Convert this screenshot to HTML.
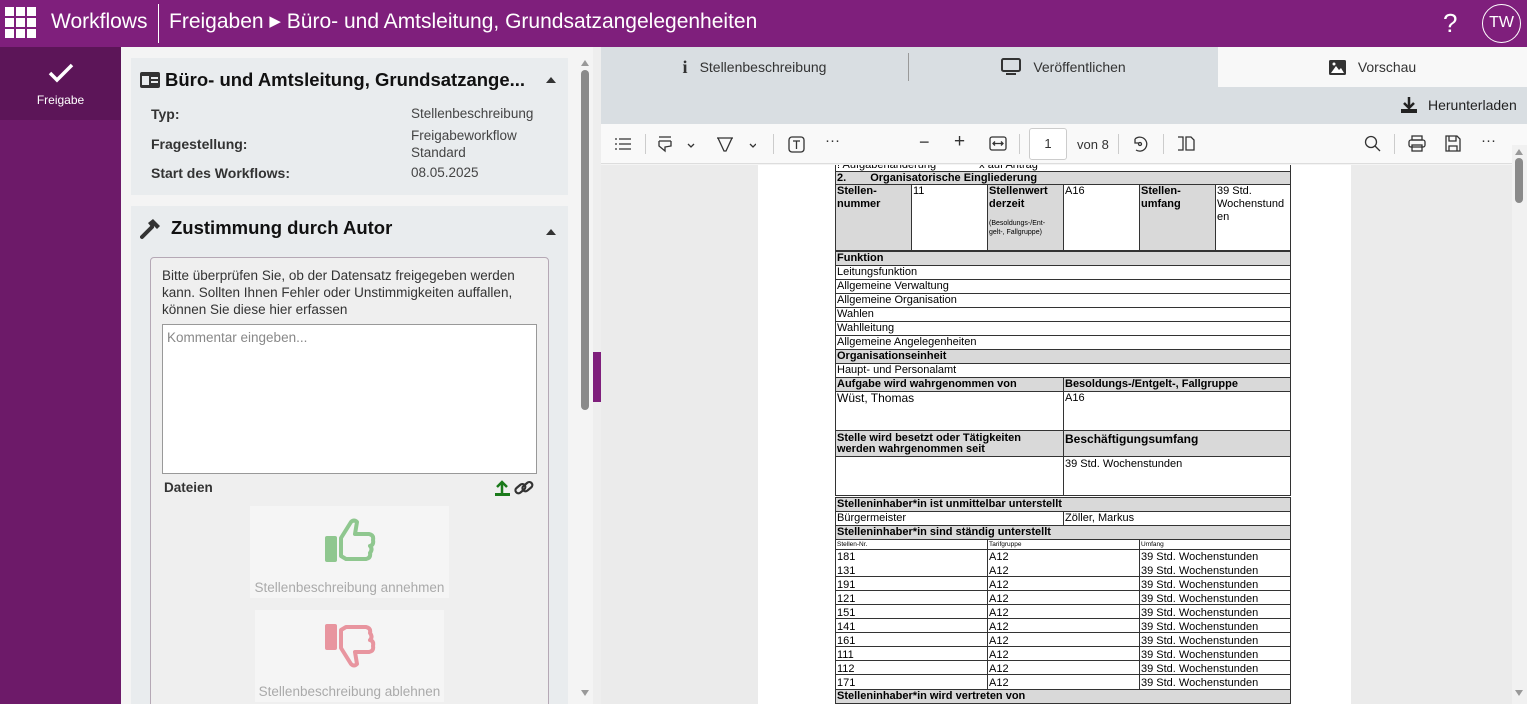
<!DOCTYPE html>
<html style="width:1527px;height:704px;overflow:hidden"><head><meta charset="utf-8"><style>
*{box-sizing:border-box;margin:0;padding:0}
body{width:1527px;height:704px;overflow:hidden;font-family:"Liberation Sans",sans-serif;background:#f4f4f4;position:relative;color:#333}
.a{position:absolute}
.top{left:0;top:0;width:1527px;height:47px;background:#7f1f7c;color:#fff}
.side{left:0;top:47px;width:121px;height:657px;background:#6d1a69}
.card{background:#e9ecee}
.lbl{font-size:14px;font-weight:bold;color:#333}
.val{font-size:13.5px;color:#444}
.pdf{font-family:"Liberation Sans",sans-serif;font-size:11px;color:#000;line-height:13px}
.c{position:absolute;border:1px solid #333;padding:0 1px;overflow:hidden;background:#fff}
.g{background:#d9d9d9;font-weight:bold}
.tab{top:49px;height:36px;font-size:14px;color:#333;display:flex;align-items:center;justify-content:center;gap:12px}
</style></head><body>
<div class="a top">
 <svg class="a" style="left:5px;top:7px" width="32" height="32" viewBox="0 0 32 32" fill="#fff"><rect x="0" y="0" width="9" height="9"/><rect x="11" y="0" width="9" height="9"/><rect x="22" y="0" width="9" height="9"/><rect x="0" y="11" width="9" height="9"/><rect x="11" y="11" width="9" height="9"/><rect x="22" y="11" width="9" height="9"/><rect x="0" y="22" width="9" height="9"/><rect x="11" y="22" width="9" height="9"/><rect x="22" y="22" width="9" height="9"/></svg>
 <div class="a" style="left:51px;top:10px;font-size:21px">Workflows</div>
 <div class="a" style="left:158px;top:4px;width:1px;height:39px;background:#fff"></div>
 <div class="a" style="left:169px;top:10px;font-size:21px">Freigaben <span style="font-size:15px;position:relative;top:-2px">&#9654;</span> Büro- und Amtsleitung, Grundsatzangelegenheiten</div>
 <div class="a" style="left:1443px;top:8px;font-size:26px">?</div>
 <div class="a" style="left:1482px;top:4px;width:39px;height:39px;border:1.5px solid #fff;border-radius:50%;font-size:16px;text-align:center;line-height:36px">TW</div>
</div>
<div class="a side"></div>
<div class="a" style="left:0;top:47px;width:121px;height:73px;background:#5c1558;color:#fff;text-align:center">
 <svg style="margin-top:16px" width="26" height="20" viewBox="0 0 26 20"><path d="M2 10 L9 17 L24 2" stroke="#fff" stroke-width="3.5" fill="none"/></svg>
 <div style="font-size:12px;margin-top:5px">Freigabe</div>
</div>
<!-- left panel -->
<div class="a card" style="left:131px;top:58px;width:437px;height:137px">
 <svg class="a" style="left:9px;top:14px" width="20" height="16" viewBox="0 0 20 16"><rect x="0" y="0" width="20" height="16" rx="2" fill="#333"/><rect x="2" y="4" width="7" height="9" fill="#e9ecee"/><rect x="11" y="5" width="7" height="2" fill="#e9ecee"/><rect x="11" y="9" width="7" height="2" fill="#e9ecee"/></svg>
 <div class="a" style="left:34px;top:11px;font-size:18.5px;font-weight:bold;color:#111">Büro- und Amtsleitung, Grundsatzange...</div>
 <div class="a" style="left:415px;top:19px;width:0;height:0;border-left:5px solid transparent;border-right:5px solid transparent;border-bottom:6px solid #333"></div>
 <div class="a lbl" style="left:20px;top:48px">Typ:</div>
 <div class="a val" style="left:280px;top:48px">Stellenbeschreibung</div>
 <div class="a lbl" style="left:20px;top:78px">Fragestellung:</div>
 <div class="a val" style="left:280px;top:69px;line-height:17px">Freigabeworkflow<br>Standard</div>
 <div class="a lbl" style="left:20px;top:107px">Start des Workflows:</div>
 <div class="a val" style="left:280px;top:107px">08.05.2025</div>
</div>
<div class="a card" style="left:131px;top:206px;width:437px;height:498px;overflow:hidden">
 <svg class="a" style="left:9px;top:12px" width="22" height="22" viewBox="0 0 22 22"><path d="M2 19 L12 9" stroke="#333" stroke-width="4" stroke-linecap="round"/><path d="M8 5 L13 1 L20 8 L17 11 L14 8 L12 10 Z" fill="#333"/></svg>
 <div class="a" style="left:40px;top:11px;font-size:18.5px;font-weight:bold;color:#111">Zustimmung durch Autor</div>
 <div class="a" style="left:415px;top:23px;width:0;height:0;border-left:5px solid transparent;border-right:5px solid transparent;border-bottom:6px solid #333"></div>
 <div class="a" style="left:19px;top:51px;width:399px;height:460px;border:1px solid #b5a8b5;border-radius:4px;background:#efefef">
  <div class="a" style="left:11px;top:9px;width:380px;font-size:13.5px;line-height:17px;color:#333">Bitte überprüfen Sie, ob der Datensatz freigegeben werden kann. Sollten Ihnen Fehler oder Unstimmigkeiten auffallen, können Sie diese hier erfassen</div>
  <div class="a" style="left:11px;top:66px;width:375px;height:150px;background:#fff;border:1px solid #999"><div style="padding:5px 4px;font-size:13.5px;color:#888">Kommentar eingeben...</div></div>
  <div class="a" style="left:13px;top:222px;font-size:13.5px;font-weight:bold;color:#333">Dateien</div>
  <svg class="a" style="left:343px;top:222px" width="42" height="17" viewBox="0 0 42 17"><path d="M8 13 V3 M3 7 L8 2 L13 7" stroke="#1a7a1a" stroke-width="2.5" fill="none"/><rect x="1" y="13" width="15" height="3" fill="#1a7a1a"/><g stroke="#333" stroke-width="2.2" fill="none"><rect x="21" y="6" width="11" height="6" rx="3" transform="rotate(-40 26 9)"/><rect x="28" y="4" width="11" height="6" rx="3" transform="rotate(-40 33 7)"/></g></svg>
  <div class="a" style="left:99px;top:248px;width:199px;height:92px;background:#f5f5f5;text-align:center">
   <svg style="margin-top:12px" width="52" height="46" viewBox="0 0 52 46"><rect x="1" y="18" width="12" height="26" rx="2" fill="#8fc78f"/><path d="M17 20 L27 4 Q30 1 33 4 L31 16 H45 Q50 17 49 22 Q50 27 46 28 Q49 31 46 35 Q47 40 42 41 H22 L17 38 Z" fill="none" stroke="#8fc78f" stroke-width="4" stroke-linejoin="round"/></svg>
   <div style="font-size:13.5px;color:#aaa;margin-top:11px">Stellenbeschreibung annehmen</div>
  </div>
  <div class="a" style="left:104px;top:352px;width:189px;height:92px;background:#f5f5f5;text-align:center">
   <svg style="margin-top:12px" width="52" height="46" viewBox="0 0 52 46"><rect x="1" y="2" width="12" height="26" rx="2" fill="#e8959f"/><path d="M17 26 L27 42 Q30 45 33 42 L31 30 H45 Q50 29 49 24 Q50 19 46 18 Q49 15 46 11 Q47 6 42 5 H22 L17 8 Z" fill="none" stroke="#e8959f" stroke-width="4" stroke-linejoin="round"/></svg>
   <div style="font-size:13.5px;color:#aaa;margin-top:11px">Stellenbeschreibung ablehnen</div>
  </div>
 </div>
</div>
<!-- left scrollbar -->
<div class="a" style="left:577px;top:47px;width:16px;height:657px;background:#f4f4f4"></div>
<div class="a" style="left:581px;top:60px;width:0;height:0;border-left:4px solid transparent;border-right:4px solid transparent;border-bottom:6px solid #999"></div>
<div class="a" style="left:581px;top:70px;width:8px;height:340px;background:#8a8a8a;border-radius:4px"></div>
<div class="a" style="left:581px;top:690px;width:0;height:0;border-left:4px solid transparent;border-right:4px solid transparent;border-top:6px solid #999"></div>
<div class="a" style="left:593px;top:47px;width:8px;height:657px;background:#eee"></div>
<div class="a" style="left:593px;top:352px;width:8px;height:50px;background:#7f1f7c"></div>
<!-- right -->
<div class="a" style="left:601px;top:47px;width:926px;height:40px;background:#d9dee2"></div>
<div class="a" style="left:1218px;top:47px;width:309px;height:40px;background:#f8f8f8"></div>
<div class="a" style="left:908px;top:53px;width:1px;height:28px;background:#999"></div>
<div class="a tab" style="left:601px;width:307px"><span style="font-family:'Liberation Serif';font-weight:bold;font-size:18px">i</span>Stellenbeschreibung</div>
<div class="a tab" style="left:909px;width:309px"><svg width="20" height="18" viewBox="0 0 20 18"><rect x="1" y="1" width="18" height="12" rx="1.5" fill="none" stroke="#333" stroke-width="2"/><rect x="5" y="15" width="10" height="2" fill="#333"/></svg>Veröffentlichen</div>
<div class="a tab" style="left:1218px;width:309px"><svg width="17" height="15" viewBox="0 0 17 15"><rect x="0" y="0" width="17" height="15" rx="1.5" fill="#333"/><path d="M2 13 L7 6 L10 10 L12 8 L15 13Z" fill="#fff"/><circle cx="5" cy="4" r="1.5" fill="#fff"/></svg>Vorschau</div>
<div class="a" style="left:601px;top:87px;width:926px;height:37px;background:#d9dee2"></div>
<svg class="a" style="left:1400px;top:96px" width="18" height="18" viewBox="0 0 18 18"><path d="M9 1 V11 M4 7 L9 12 L14 7" stroke="#222" stroke-width="2.5" fill="none"/><rect x="1" y="13" width="16" height="4" fill="#222"/></svg>
<div class="a" style="left:1428px;top:97px;font-size:14px;color:#222">Herunterladen</div>
<div class="a" style="left:601px;top:124px;width:926px;height:40px;background:#f9f9f9;border-bottom:1px solid #ddd;font-size:13px;color:#333">
 <svg class="a" style="left:13px;top:13px" width="18" height="14" viewBox="0 0 18 14" stroke="#333" stroke-width="1.3"><path d="M1 2h2M5 2h12M1 7h2M5 7h12M1 12h2M5 12h12"/></svg>
 <div class="a" style="left:44px;top:10px;width:1px;height:20px;background:#ccc"></div>
 <svg class="a" style="left:56px;top:11px" width="40" height="18" viewBox="0 0 40 18" fill="none" stroke="#333" stroke-width="1.3"><path d="M2 2h12M2 6h12M2 6v5l6 5v-4l6-1V6M31 9l3 3 3-3"/></svg>
 <svg class="a" style="left:115px;top:11px" width="40" height="18" viewBox="0 0 40 18" fill="none" stroke="#333" stroke-width="1.3"><path d="M2 3h14L10 16H8z M1 3h16M34 9l3 3 3-3"/></svg>
 <div class="a" style="left:172px;top:10px;width:1px;height:20px;background:#ccc"></div>
 <svg class="a" style="left:187px;top:12px" width="17" height="17" viewBox="0 0 17 17" fill="none" stroke="#333" stroke-width="1.3"><rect x="1" y="1" width="15" height="15" rx="3"/><path d="M5 5h7M8.5 5v8"/></svg>
 <div class="a" style="left:224px;top:8px;font-size:15px">···</div>
 <div class="a" style="left:318px;top:8px;font-size:18px">−</div>
 <div class="a" style="left:353px;top:7px;font-size:19px">+</div>
 <svg class="a" style="left:388px;top:12px" width="18" height="15" viewBox="0 0 18 15" fill="none" stroke="#333" stroke-width="1.3"><rect x="1" y="1" width="16" height="13" rx="2"/><path d="M4 7.5h10M6 5.5l-2 2 2 2M12 5.5l2 2-2 2"/></svg>
 <div class="a" style="left:418px;top:10px;width:1px;height:20px;background:#ccc"></div>
 <div class="a" style="left:428px;top:4px;width:38px;height:32px;background:#fff;border:1px solid #ccc;border-radius:3px;text-align:center;line-height:30px;font-size:13px">1</div>
 <div class="a" style="left:476px;top:13px">von 8</div>
 <div class="a" style="left:517px;top:10px;width:1px;height:20px;background:#ccc"></div>
 <svg class="a" style="left:530px;top:11px" width="18" height="18" viewBox="0 0 18 18" fill="none" stroke="#333" stroke-width="1.3"><path d="M4 4a7 7 0 1 1 1 11M4 4v4h4"/><circle cx="9" cy="9" r="1.5"/></svg>
 <div class="a" style="left:562px;top:10px;width:1px;height:20px;background:#ccc"></div>
 <svg class="a" style="left:576px;top:12px" width="18" height="15" viewBox="0 0 18 15" fill="none" stroke="#333" stroke-width="1.3"><path d="M1 1h5v13H1M9 1h5l3 3v10H9z" stroke-dasharray=""/></svg>
 <svg class="a" style="left:763px;top:11px" width="17" height="17" viewBox="0 0 17 17" fill="none" stroke="#333" stroke-width="1.3"><circle cx="7" cy="7" r="5.5"/><path d="M11 11l5 5"/></svg>
 <div class="a" style="left:793px;top:10px;width:1px;height:20px;background:#ccc"></div>
 <svg class="a" style="left:807px;top:11px" width="18" height="17" viewBox="0 0 18 17" fill="none" stroke="#333" stroke-width="1.3"><rect x="4" y="1" width="10" height="4"/><rect x="1" y="5" width="16" height="7" rx="2"/><rect x="4" y="10" width="10" height="6"/></svg>
 <svg class="a" style="left:844px;top:11px" width="16" height="17" viewBox="0 0 16 17" fill="none" stroke="#333" stroke-width="1.3"><path d="M1 1h11l3 3v12H1z M4 1v5h7V1M4 16v-5h8v5"/></svg>
 <div class="a" style="left:880px;top:8px;font-size:15px">···</div>
</div>
<!-- viewer -->
<div class="a" style="left:601px;top:165px;width:911px;height:539px;background:#ebebeb"></div>
<div class="a" style="left:1512px;top:145px;width:15px;height:559px;background:#f1f1f1"></div>
<div class="a" style="left:1515px;top:149px;width:0;height:0;border-left:4px solid transparent;border-right:4px solid transparent;border-bottom:6px solid #999"></div>
<div class="a" style="left:1515px;top:158px;width:8px;height:45px;background:#8a8a8a;border-radius:4px"></div>
<div class="a" style="left:1515px;top:690px;width:0;height:0;border-left:4px solid transparent;border-right:4px solid transparent;border-top:6px solid #999"></div>
<div class="a" style="left:758px;top:165px;width:593px;height:539px;background:#fff"></div>
<div class="a pdf" style="left:0;top:0;width:1527px;height:704px;overflow:hidden;clip-path:inset(165px 0 0 0)">
 <div class="c" style="left:835px;top:158px;width:456px;height:14px">! Aufgabenänderung <span style="margin-left:40px">x auf Antrag</span></div>
 <div class="c g" style="left:835px;top:171px;width:456px;height:14px">2.<span style="margin-left:24px">Organisatorische Eingliederung</span></div>
 <div class="c g" style="left:835px;top:184px;width:77px;height:67px">Stellen-<br>nummer</div>
 <div class="c" style="left:911px;top:184px;width:77px;height:67px">11</div>
 <div class="c g" style="left:987px;top:184px;width:77px;height:67px">Stellenwert<br>derzeit<div style="font-size:7px;line-height:9px;font-weight:normal;margin-top:8px">(Besoldungs-/Ent-<br>gelt-, Fallgruppe)</div></div>
 <div class="c" style="left:1063px;top:184px;width:77px;height:67px">A16</div>
 <div class="c g" style="left:1139px;top:184px;width:77px;height:67px">Stellen-<br>umfang</div>
 <div class="c" style="left:1215px;top:184px;width:76px;height:67px">39 Std.<br>Wochenstund<br>en</div>
 <div class="c g" style="left:835px;top:251px;width:456px;height:15px">Funktion</div>
 <div class="c" style="left:835px;top:265px;width:456px;height:15px">Leitungsfunktion</div>
 <div class="c" style="left:835px;top:279px;width:456px;height:15px">Allgemeine Verwaltung</div>
 <div class="c" style="left:835px;top:293px;width:456px;height:15px">Allgemeine Organisation</div>
 <div class="c" style="left:835px;top:307px;width:456px;height:15px">Wahlen</div>
 <div class="c" style="left:835px;top:321px;width:456px;height:15px">Wahlleitung</div>
 <div class="c" style="left:835px;top:335px;width:456px;height:15px">Allgemeine Angelegenheiten</div>
 <div class="c g" style="left:835px;top:349px;width:456px;height:15px">Organisationseinheit</div>
 <div class="c" style="left:835px;top:363px;width:456px;height:15px">Haupt- und Personalamt</div>
 <div class="c g" style="left:835px;top:377px;width:229px;height:15px">Aufgabe wird wahrgenommen von</div>
 <div class="c g" style="left:1063px;top:377px;width:228px;height:15px">Besoldungs-/Entgelt-, Fallgruppe</div>
 <div class="c" style="left:835px;top:391px;width:229px;height:40px;font-size:12px">Wüst, Thomas</div>
 <div class="c" style="left:1063px;top:391px;width:228px;height:40px">A16</div>
 <div class="c g" style="left:835px;top:430px;width:229px;height:27px;line-height:11px;padding-top:2px">Stelle wird besetzt oder Tätigkeiten<br>werden wahrgenommen seit</div>
 <div class="c g" style="left:1063px;top:430px;width:228px;height:27px;font-size:12px;padding-top:2px">Beschäftigungsumfang</div>
 <div class="c" style="left:835px;top:456px;width:229px;height:40px"></div>
 <div class="c" style="left:1063px;top:456px;width:228px;height:40px;padding-top:1px">39 Std. Wochenstunden</div>
 <div class="c g" style="left:835px;top:497px;width:456px;height:15px">Stelleninhaber*in ist unmittelbar unterstellt</div>
 <div class="c" style="left:835px;top:511px;width:229px;height:15px">Bürgermeister</div>
 <div class="c" style="left:1063px;top:511px;width:228px;height:15px">Zöller, Markus</div>
 <div class="c g" style="left:835px;top:525px;width:456px;height:15px">Stelleninhaber*in sind ständig unterstellt</div>
 <div class="c" style="left:835px;top:539px;width:153px;height:11px;font-size:6.5px;line-height:9px">Stellen-Nr.</div>
 <div class="c" style="left:987px;top:539px;width:153px;height:11px;font-size:6.5px;line-height:9px">Tarifgruppe</div>
 <div class="c" style="left:1139px;top:539px;width:152px;height:11px;font-size:6.5px;line-height:9px">Umfang</div>
 <div class="c" style="left:835px;top:549px;width:153px;height:141px;line-height:14px">181<br>131<br>191<br>121<br>151<br>141<br>161<br>111<br>112<br>171</div>
 <div class="c" style="left:987px;top:549px;width:153px;height:141px;line-height:14px">A12<br>A12<br>A12<br>A12<br>A12<br>A12<br>A12<br>A12<br>A12<br>A12</div>
 <div class="c" style="left:1139px;top:549px;width:152px;height:141px;line-height:14px">39 Std. Wochenstunden<br>39 Std. Wochenstunden<br>39 Std. Wochenstunden<br>39 Std. Wochenstunden<br>39 Std. Wochenstunden<br>39 Std. Wochenstunden<br>39 Std. Wochenstunden<br>39 Std. Wochenstunden<br>39 Std. Wochenstunden<br>39 Std. Wochenstunden</div>
 <div class="a" style="left:836px;top:563px;width:454px;height:112px;background:repeating-linear-gradient(to bottom,transparent 0,transparent 13px,#333 13px,#333 14px)"></div>
 <div class="c g" style="left:835px;top:689px;width:456px;height:15px">Stelleninhaber*in wird vertreten von</div>
</div>
</body></html>
